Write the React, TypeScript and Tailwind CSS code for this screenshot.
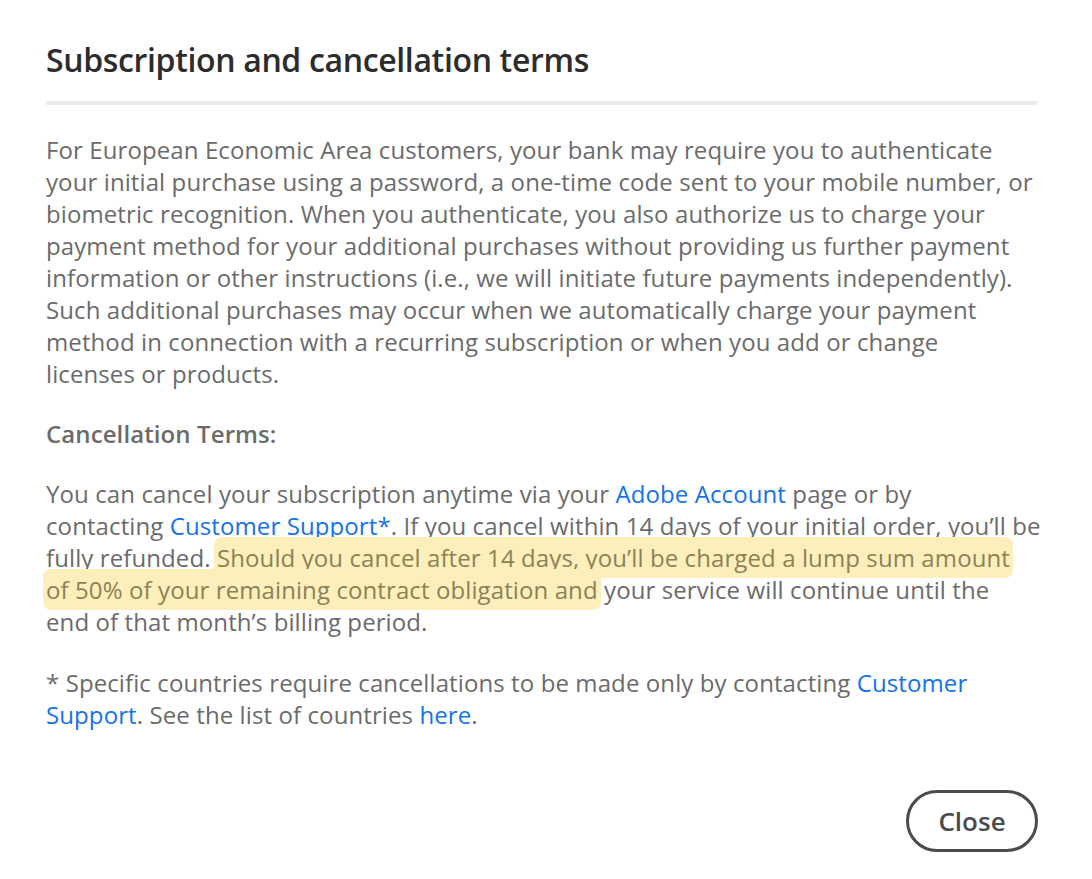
export default function App() {
  return (
    <div className="min-h-screen w-full bg-white font-['Open_Sans',sans-serif]">
      <div className="w-[992px] ml-[46px] pt-[36px]">
        <h2 className="text-[32px] font-semibold text-[#2c2c2c] tracking-[-0.35px] leading-[48px]">
          Subscription and cancellation terms
        </h2>
        <div className="mt-[17px] h-[4px] bg-[#ebebeb]" />

        {/* text runs a touch wider than the divider, like the original */}
        <div className="mt-[29px] w-[1004px] text-[24px] leading-[32px] text-[#6b6b6b] tracking-[0.1px]">
          <p>
            For European Economic Area customers, your bank may require you to authenticate
            your initial purchase using a password, a one-time code sent to your mobile number, or
            biometric recognition. When you authenticate, you also authorize us to charge your
            payment method for your additional purchases without providing us further payment
            information or other instructions (i.e., we will initiate future payments independently).
            Such additional purchases may occur when we automatically charge your payment
            method in connection with a recurring subscription or when you add or change
            <br />
            licenses or products.
          </p>

          <p className="mt-[28px] font-semibold tracking-[0.1px]">Cancellation Terms:</p>

          <p className="mt-[28px]">
            You can cancel your subscription anytime via your{" "}
            <a className="text-[#1473e6]">Adobe Account</a> page or by
            <br />
            contacting <a className="text-[#1473e6]">Customer Support*</a>. If you cancel within 14
            days of your initial order, you’ll&nbsp;be
            <br />
            fully refunded.{" "}
            <span className="bg-[#fcefbb] text-[#8c8256] box-decoration-clone rounded-[8px] -mx-[3px] px-[3px] py-[4px]">
              Should you cancel after 14 days, you’ll be charged a lump sum amount
              <br />
              of 50% of your remaining contract obligation and
            </span>{" "}
            your service will continue until the
            <br />
            end of that month’s billing period.
          </p>

          <p className="mt-[29px]">
            * Specific countries require cancellations to be made only by contacting{" "}
            <a className="text-[#1473e6]">Customer</a>
            <br />
            <a className="text-[#1473e6]">Support</a>. See the list of countries{" "}
            <a className="text-[#1473e6]">here</a>.
          </p>
        </div>

        <div className="mt-[59px] flex justify-end">
          <button className="h-[62px] w-[132px] rounded-full border-[3px] border-[#4b4b4b] text-[26px] font-semibold text-[#4b4b4b]">
            Close
          </button>
        </div>
      </div>
    </div>
  );
}
